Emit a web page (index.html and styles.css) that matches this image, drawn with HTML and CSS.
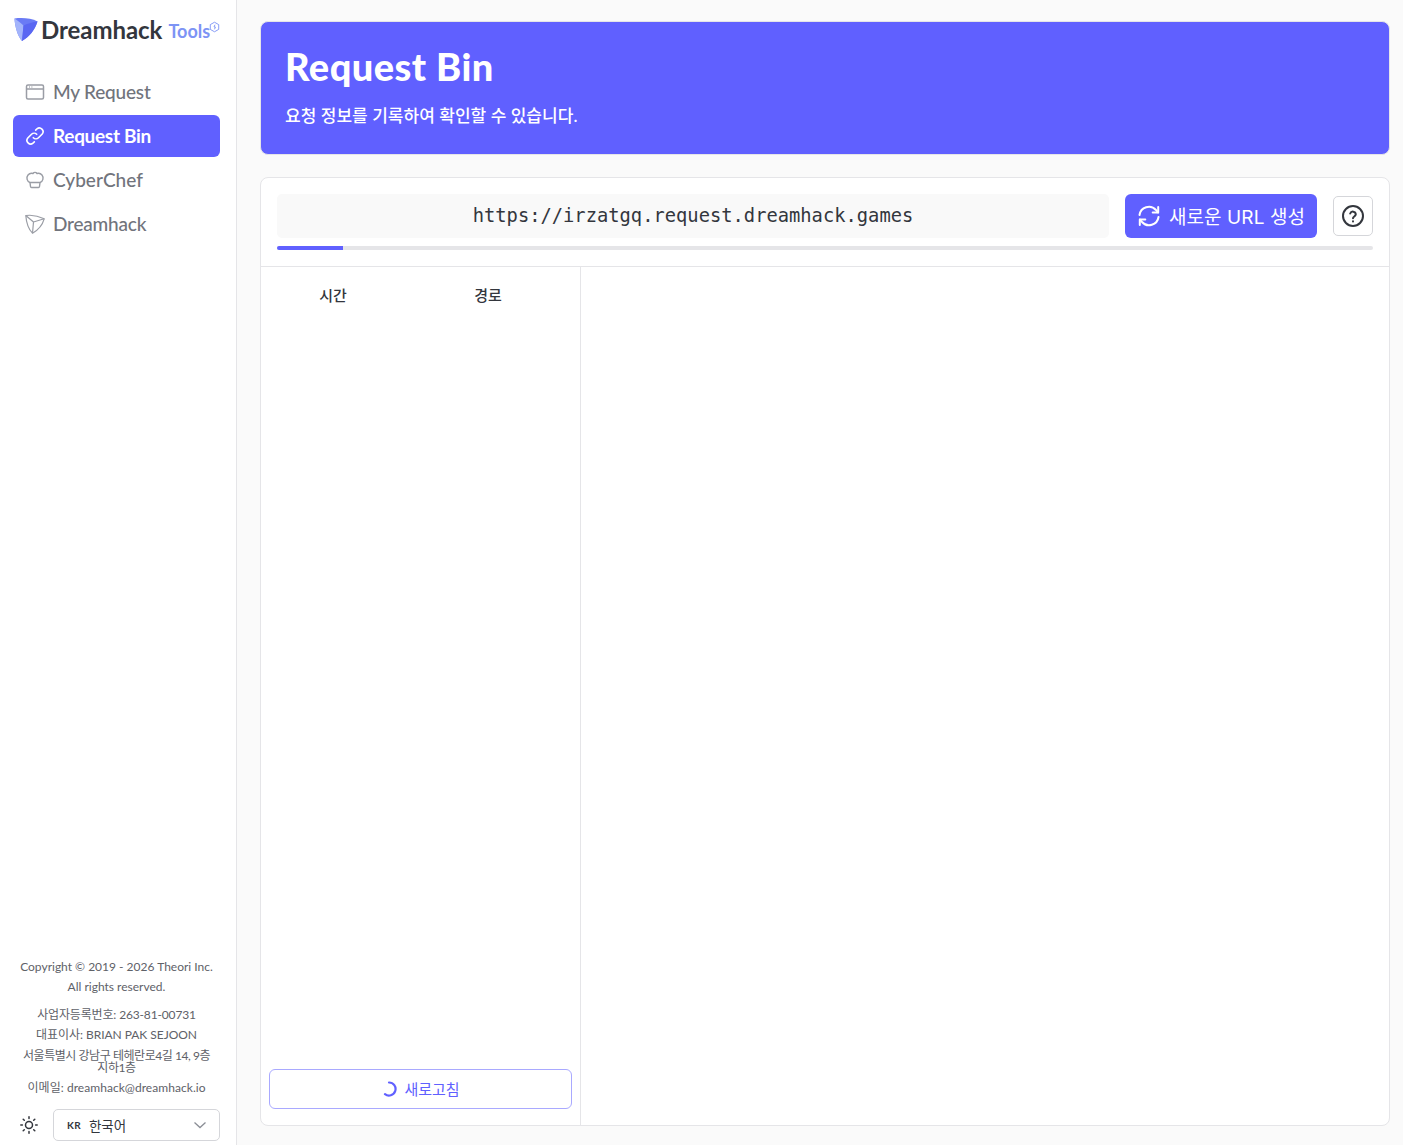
FILE: index.html
```html
<!DOCTYPE html>
<html lang="ko">
<head>
<meta charset="utf-8">
<title>Request Bin</title>
<link rel="stylesheet" href="styles.css">
</head>
<body>
<div class="app">
  <aside class="sidebar">
    <div class="logo">
      <svg class="logo-mark" viewBox="0 0 24 24" width="24" height="24">
        <path d="M0.5 1.5 C8 0.5 17 1 23.5 4.5 C21 13 15 20 8 24 C3.5 19 1 10 0.5 1.5Z" fill="#6a7bf5"/>
        <path d="M0.5 1.5 C4 4 7 6 9.5 8.5 C9 14 8.5 19 8 24 C3.5 19 1 10 0.5 1.5Z" fill="#a3b4fb"/>
        <path d="M9.5 8.5 C14 6.5 19 5 23.5 4.5 C21 13 15 20 8 24 Z" fill="#5a67f2"/>
      </svg>
      <span class="logo-name">Dreamhack</span>
      <span class="logo-tools">Tools</span>
      <svg class="logo-badge" viewBox="0 0 12 12" width="11" height="12" fill="none" stroke="#7d94f5" stroke-width="1">
        <path d="M6 .8l4.6 2.600v5.200L6 11.200 1.400 8.600V3.400Z"/><path d="M6.500 3.500L5.500 6h1.500L6 8.500"/>
      </svg>
    </div>
    <nav class="nav">
      <a class="nav-item">
        <svg class="nav-icon" viewBox="0 0 20 20" fill="none" stroke="currentColor" stroke-width="1.500"><rect x="1.500" y="3" width="17" height="14" rx="1.500"/><path d="M1.500 7h17M4 5h.8M6.500 5h.8"/></svg>
        <span>My Request</span>
      </a>
      <a class="nav-item active">
        <svg class="nav-icon" viewBox="0 0 20 20" fill="none" stroke="currentColor" stroke-width="1.600" stroke-linecap="round"><path d="M8.300 11.700a3.700 3.700 0 0 0 5.200 0l3.700-3.700a3.700 3.700 0 0 0-5.200-5.200l-1.300 1.300"/><path d="M11.700 8.300a3.700 3.700 0 0 0-5.200 0l-3.700 3.700a3.700 3.700 0 0 0 5.200 5.200l1.300-1.300"/></svg>
        <span>Request Bin</span>
      </a>
      <a class="nav-item chef">
        <svg class="nav-icon" viewBox="0 0 20 20" fill="none" stroke="currentColor" stroke-width="1.400" stroke-linejoin="round"><path d="M5 12.500C2 11.500 1 7.500 3 5c1.500-1.800 3.500-2 5-1.500 1-1.500 3-1.500 4 0 1.500-.5 3.500-.3 5 1.500 2 2.500 1 6.500-2 7.500Z"/><path d="M5 12.500l.5 4c.1.7.5 1 1 1h7c.5 0 .9-.3 1-1l.5-4"/></svg>
        <span>CyberChef</span>
      </a>
      <a class="nav-item">
        <svg class="nav-icon" viewBox="0 0 20 20" fill="none" stroke="currentColor" stroke-width="1.200" stroke-linejoin="round"><path d="M.8 1.500c6-.8 12.200.2 18.400 3.300-1.800 6.200-5.500 10.900-11.700 14.400C3.300 15 1.300 8 .8 1.500Z"/><path d="M.8 1.500L8.500 8 19.200 4.800M8.500 8l-1 11.200"/></svg>
        <span>Dreamhack</span>
      </a>
    </nav>
    <footer class="side-footer">
      <div class="copy">
        <p>Copyright © 2019 - 2026 Theori Inc.</p>
        <p>All rights reserved.</p>
      </div>
      <div class="biz">
        <p class="reg">사업자등록번호: 263-81-00731</p>
        <p class="ceo">대표이사: BRIAN PAK SEJOON</p>
        <p class="addr">서울특별시 강남구 테헤란로4길 14, 9층 지하1층</p>
        <p class="mail">이메일: dreamhack@dreamhack.io</p>
      </div>
      <div class="prefs">
        <svg class="sun" viewBox="0 0 20 20" fill="none" stroke="#33363d" stroke-width="1.500" stroke-linecap="round"><circle cx="10" cy="10" r="3.500"/><path d="M10 1.800v1.600M10 16.600v1.600M1.800 10h1.600M16.600 10h1.600M4.200 4.200l1.100 1.100M14.700 14.700l1.100 1.100M4.200 15.800l1.100-1.100M14.700 5.300l1.100-1.100"/></svg>
        <div class="lang">
          <span class="lang-code">KR</span>
          <span class="lang-name">한국어</span>
          <svg class="chev" viewBox="0 0 14 8" fill="none" stroke="#8b8e96" stroke-width="1.300"><path d="M1.500 1.500L7 6.500l5.500-5"/></svg>
        </div>
      </div>
    </footer>
  </aside>
  <main class="main">
    <header class="banner">
      <h1>Request Bin</h1>
      <p>요청 정보를 기록하여 확인할 수 있습니다.</p>
    </header>
    <section class="card">
      <div class="toolbar">
        <div class="url-row">
          <div class="url">https://irzatgq.request.dreamhack.games</div>
          <button class="new-url">
            <svg viewBox="0 0 24 24" width="24" height="24" fill="none" stroke="#fff" stroke-width="2" stroke-linecap="round" stroke-linejoin="round"><path d="M2.500 11a9.500 9.500 0 0 1 16.500-5l2 2.500"/><path d="M21.200 3v5.500h-5.500"/><path d="M21.500 13a9.500 9.500 0 0 1-16.500 5l-2-2.500"/><path d="M2.800 21v-5.500h5.500"/></svg>
            <span>새로운 URL 생성</span>
          </button>
          <button class="help">
            <svg viewBox="0 0 24 24" width="24" height="24" fill="none" stroke="#33363d" stroke-width="2" stroke-linecap="round"><circle cx="12" cy="12" r="10"/><path d="M9.200 9.500a2.900 2.900 0 0 1 5.600.8c0 1.900-2.800 2.400-2.800 3.900"/><path d="M12 17.300v.1"/></svg>
          </button>
        </div>
        <div class="progress"><div class="progress-fill"></div></div>
      </div>
      <div class="panes">
        <div class="list">
          <div class="list-head"><span>시간</span><span>경로</span></div>
          <button class="refresh">
            <svg viewBox="0 0 16 16" width="16" height="16" fill="none" stroke="#6060ff" stroke-width="2.200" stroke-linecap="round"><path d="M8 1.500A6.500 6.500 0 1 1 4 13.100"/></svg>
            <span>새로고침</span>
          </button>
        </div>
        <div class="detail"></div>
      </div>
    </section>
  </main>
</div>
</body>
</html>
```
FILE: styles.css
```css
* { box-sizing: border-box; }
html, body { margin: 0; height: 100%; }
body {
  background: #fafafa;
  font-family: "Lato", "Noto Sans CJK KR", sans-serif;
  color: #33363d;
}
p, h1 { margin: 0; }
button { font: inherit; cursor: pointer; }
.app { display: flex; height: 1145px; overflow: hidden; }
.sidebar {
  width: 237px;
  flex: none;
  display: flex;
  flex-direction: column;
  background: #fff;
  border-right: 1px solid #e5e5e8;
  padding: 0 16px 4px 13px;
}
.logo {
  height: 58px;
  display: flex;
  align-items: center;
  position: relative;
}
.logo-mark { flex: none; margin-left: 1px; }
.logo-name {
  margin-left: 3px;
  font-size: 24px;
  font-weight: 700;
  letter-spacing: -0.05px;
  color: #33363d;
}
.logo-tools {
  margin-left: 6px;
  margin-top: 4px;
  font-size: 18px;
  font-weight: 700;
  color: #7d94f5;
}
.logo-badge { position: absolute; left: 196px; top: 21px; }
.nav { display: flex; flex-direction: column; gap: 2px; margin-top: 13px; }
.nav-item {
  height: 42px;
  display: flex;
  align-items: center;
  gap: 8px;
  padding: 0 12px;
  border-radius: 6px;
  font-size: 19px;
  font-weight: 500;
  letter-spacing: -0.2px;
  color: #71747c;
}
.nav-item.chef { letter-spacing: 0; }
.nav-item span { padding-bottom: 2px; }
.nav-item .nav-icon { color: #9a9da5; }
.nav-item.active { background: #6060ff; color: #fff; font-weight: 700; letter-spacing: -0.3px; }
.nav-item.active .nav-icon { color: #fff; }
.nav-icon { width: 20px; height: 20px; flex: none; }
.side-footer { margin-top: auto; text-align: center; font-size: 12px; color: #5e6168; }
.copy p { line-height: 20px; }
.biz { margin-top: 8px; }
.biz p { line-height: 20px; letter-spacing: -0.15px; }
.biz p.reg { margin-bottom: 0; }
.biz p.ceo { margin-bottom: 2px; letter-spacing: -0.05px; }
.biz p.addr { line-height: 12px; padding: 3px 6px 4px; letter-spacing: -0.45px; }
.biz p.mail { margin-bottom: 1px; letter-spacing: 0.05px; }
.prefs { display: flex; align-items: center; gap: 14px; margin-top: 11px; padding-left: 6px; }
.sun { width: 20px; height: 20px; flex: none; }
.lang {
  flex: 1;
  height: 32px;
  display: flex;
  align-items: center;
  padding: 0 12px 0 13px;
  background: #fff;
  border: 1px solid #d5d6da;
  border-radius: 5px;
  color: #33363d;
}
.lang-code { font-size: 10px; font-weight: 700; margin-right: 8px; letter-spacing: 0.3px; }
.lang-name { font-size: 13.500px; padding-bottom: 1px; }
.chev { width: 14px; height: 8px; margin-left: auto; }
.main {
  flex: 1;
  min-width: 0;
  display: flex;
  flex-direction: column;
  gap: 22px;
  padding: 21px 13px 19px 23px;
}
.banner {
  height: 134px;
  flex: none;
  background: #6060ff;
  border: 1px solid #e5e5e8;
  border-radius: 8px;
  padding: 20px 24px;
  color: #fff;
}
.banner h1 { font-size: 38px; line-height: 48px; font-weight: 900; letter-spacing: 0.45px; }
.banner p { margin-top: 14px; font-size: 17px; line-height: 24px; font-weight: 500; letter-spacing: 0.05px; }
.card {
  flex: 1;
  min-height: 0;
  display: flex;
  flex-direction: column;
  background: #fff;
  border: 1px solid #e5e5e8;
  border-radius: 8px;
}
.toolbar { padding: 16px; border-bottom: 1px solid #e5e5e8; flex: none; }
.url-row { display: flex; align-items: center; gap: 16px; }
.url {
  flex: 1;
  height: 44px;
  display: flex;
  align-items: center;
  justify-content: center;
  background: #f9f9f9;
  border-radius: 5px;
  font-family: "DejaVu Sans Mono", monospace;
  font-size: 18.770px;
  color: #33363d;
  padding-bottom: 2px;
}
.new-url {
  width: 192px;
  height: 44px;
  display: flex;
  align-items: center;
  justify-content: center;
  gap: 8px;
  background: #6060ff;
  border: 0;
  border-radius: 6px;
  color: #fff;
  font-family: "Inter", "Noto Sans CJK KR", sans-serif;
  font-size: 19px;
  font-weight: 400;
  letter-spacing: 0.1px;
  padding: 0;
}
.new-url span { padding-bottom: 2px; }
.help {
  width: 40px;
  height: 40px;
  display: flex;
  align-items: center;
  justify-content: center;
  background: #fff;
  border: 1px solid #d5d6da;
  border-radius: 5px;
  padding: 0;
}
.progress { height: 4px; margin-top: 8px; background: #e5e5e8; border-radius: 2px; overflow: hidden; }
.progress-fill { width: 6%; height: 100%; background: #6060ff; }
.panes { flex: 1; min-height: 0; display: flex; }
.list {
  width: 320px;
  flex: none;
  display: flex;
  flex-direction: column;
  border-right: 1px solid #e5e5e8;
  padding: 0 8px 16px;
}
.list-head {
  display: grid;
  grid-template-columns: 128px 182px;
  padding-top: 18px;
  height: 56px;
  font-size: 15px;
  line-height: 21px;
  font-weight: 500;
  text-align: center;
}
.refresh {
  margin-top: auto;
  height: 40px;
  display: flex;
  align-items: center;
  justify-content: center;
  gap: 7px;
  background: #fff;
  border: 1px solid #a9a9ff;
  border-radius: 6px;
  color: #6060ff;
  font-size: 15px;
  padding: 0;
}
.refresh span { padding-bottom: 2px; }
.detail { flex: 1; }
```
